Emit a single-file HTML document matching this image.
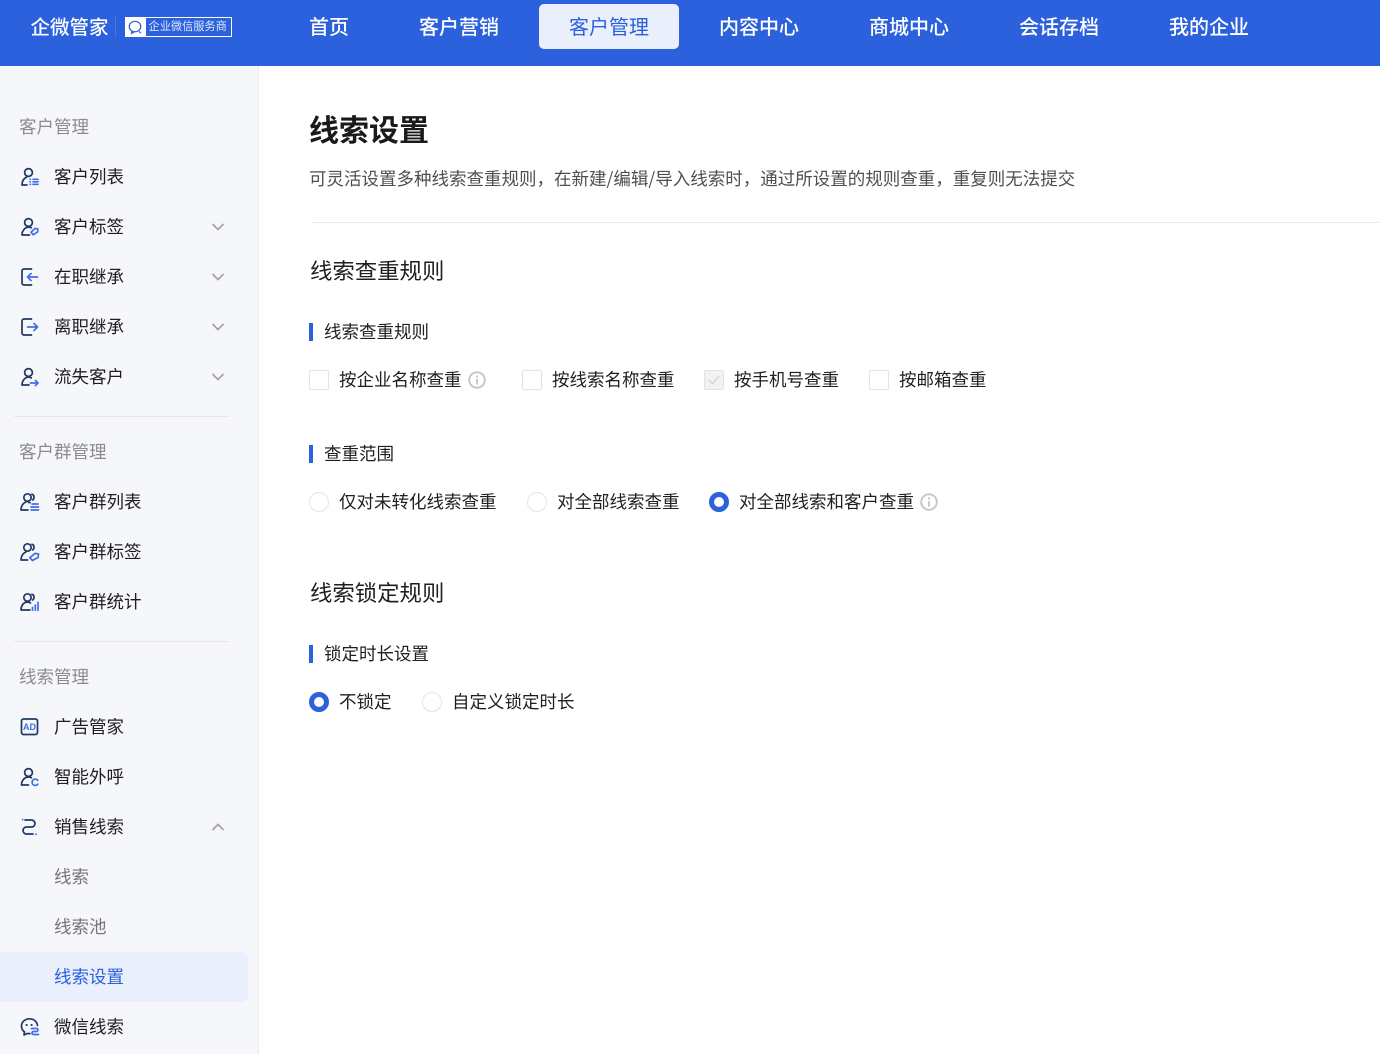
<!DOCTYPE html>
<html lang="zh-CN"><head><meta charset="utf-8"><title>线索设置</title>
<style>
html,body{margin:0;padding:0;background:#fff}
body{width:1380px;height:1054px;overflow:hidden;position:relative;font-family:"Liberation Sans","Noto Sans CJK SC",sans-serif;color:#1f1f1f}
.t{position:absolute;white-space:nowrap;line-height:26px;height:26px;font-size:17.5px}
.top{position:absolute;left:0;top:0;width:1380px;height:66px;background:#2b61dc}
.nav{position:absolute;top:4px;height:45px;line-height:49px;width:140px;text-align:center;color:#fff;font-size:20px;font-weight:500}
.nav.on{background:#e9effb;color:#2b61dc;border-radius:5px}
.side{position:absolute;left:0;top:66px;width:258px;height:988px;background:#f5f7fb;border-right:1px solid #ebedf1}
.g{color:#8c8c8c}
.hr{position:absolute;left:14px;width:215px;height:1px;background:#e8e8e8}
svg{position:absolute;overflow:visible}
svg.i{width:20px;height:20px;left:20px;fill:none;stroke:#1f3864;stroke-width:1.7;stroke-linecap:round;stroke-linejoin:round}
svg.i .b{stroke:#3f6fe4;stroke-width:1.7}
svg.c{left:211px;width:14px;height:8px;fill:none;stroke:#a3a3a3;stroke-width:1.7}
.bar{position:absolute;left:309px;width:4px;height:18px;background:#2b61dc}
.cb{position:absolute;width:18px;height:18px;border:1px solid #e3e3e3;border-radius:2px;background:#fff}
.r{position:absolute;width:18px;height:18px;border:1px solid #e3e3e3;border-radius:50%;background:#fff}
.ro{position:absolute;width:20px;height:20px;border-radius:50%;background:#fff;border:5.5px solid #2b61dc;box-sizing:border-box}
svg.info{width:18px;height:18px;fill:none;stroke:#c9c9c9;stroke-width:2}
.st{font-size:22.4px;line-height:32px;height:32px;color:#1f1f1f}
</style></head><body>
<div class="top"></div>
<div class="t" style="left:30.500px;top:15px;color:#fff;font-size:19.500px;font-weight:500">企微管家</div>
<div style="position:absolute;left:115px;top:17px;width:1px;height:20px;background:#4a79e3"></div>
<div style="position:absolute;left:125px;top:17px;width:107px;height:20px;background:#fff"></div>
<div style="position:absolute;left:146px;top:18px;width:85px;height:18px;background:#2b61dc"></div>
<svg style="left:128px;top:20px;width:16px;height:15px" viewBox="0 0 16 15" fill="none" stroke="#2b61dc" stroke-width="1.200"><ellipse cx="7" cy="6.500" rx="5.800" ry="5.200"/><path d="M4 11 3.500 13.500 6.500 11.800M11 11.500l2 1.500"/></svg>
<div class="t" style="left:148.500px;top:14px;color:#dfe8fb;font-size:11.200px">企业微信服务商</div>
<div class="nav" style="left:259px">首页</div>
<div class="nav" style="left:389px">客户营销</div>
<div class="nav on" style="left:539px;font-weight:400">客户管理</div>
<div class="nav" style="left:689px">内容中心</div>
<div class="nav" style="left:839px">商城中心</div>
<div class="nav" style="left:989px">会话存档</div>
<div class="nav" style="left:1139px">我的企业</div>

<div class="side"></div>
<div class="t g" style="left:19px;top:114px">客户管理</div>
<div class="t" style="left:54px;top:164px">客户列表</div>
<div class="t" style="left:54px;top:214px">客户标签</div>
<div class="t" style="left:54px;top:264px">在职继承</div>
<div class="t" style="left:54px;top:314px">离职继承</div>
<div class="t" style="left:54px;top:364px">流失客户</div>
<div class="hr" style="top:416px"></div>
<div class="t g" style="left:19px;top:439px">客户群管理</div>
<div class="t" style="left:54px;top:489px">客户群列表</div>
<div class="t" style="left:54px;top:539px">客户群标签</div>
<div class="t" style="left:54px;top:589px">客户群统计</div>
<div class="hr" style="top:641px"></div>
<div class="t g" style="left:19px;top:664px">线索管理</div>
<div class="t" style="left:54px;top:714px">广告管家</div>
<div class="t" style="left:54px;top:764px">智能外呼</div>
<div class="t" style="left:54px;top:814px">销售线索</div>
<div class="t" style="left:54px;top:864px;color:#757575">线索</div>
<div class="t" style="left:54px;top:914px;color:#757575">线索池</div>
<div style="position:absolute;left:0;top:952px;width:248px;height:50px;background:#e9effb;border-radius:0 6px 6px 0"></div>
<div class="t" style="left:54px;top:964px;color:#2b61dc">线索设置</div>
<div class="t" style="left:54px;top:1014px">微信线索</div>

<svg class="i" style="top:167px" viewBox="0 0 20 20"><circle cx="8.500" cy="5.500" r="3.900"/><path d="M2 18c0-3.500 1.500-6.500 4.500-7.800M2 18h5"/><path class="b" d="M10 12.300h.4M13 12.300h5M10 14.800h.4M13 14.800h5M10 17.300h.4M13 17.300h5" stroke-width="1.400"/></svg>
<svg class="i" style="top:217px" viewBox="0 0 20 20"><circle cx="8.500" cy="5.500" r="3.900"/><path d="M2 18c0-4 2.800-7.800 6.500-7.800 1.200 0 2 .2 2.800.6M2 18h7.500"/><path class="b" d="M13.300 17.800l-2.300-2.500 4-3.800 2.800.3-.1 3z"/></svg>
<svg class="i" style="top:267px" viewBox="0 0 20 20"><path d="M11.500 2H4a2 2 0 0 0-2 2v12a2 2 0 0 0 2 2h7.500"/><path class="b" d="M17.500 10H7.500M11 6.500 7.500 10l3.500 3.500"/></svg>
<svg class="i" style="top:317px" viewBox="0 0 20 20"><path d="M11.500 2H4a2 2 0 0 0-2 2v12a2 2 0 0 0 2 2h7.500"/><path class="b" d="M7.500 10h10M14 6.500 17.500 10 14 13.500"/></svg>
<svg class="i" style="top:367px" viewBox="0 0 20 20"><circle cx="8.500" cy="5.500" r="3.900"/><path d="M2 18c0-4 2.800-7.800 6.500-7.800 1 0 2 .3 2.800.7M2 18h7"/><path class="b" d="M10.500 16h7.500M15.500 13.500 18 16l-2.500 2.500"/></svg>
<svg class="i" style="top:492px" viewBox="0 0 20 20"><circle cx="7.500" cy="5.500" r="3.700"/><path d="M1 18c0-3.800 2-7 5-8M1 18h7M12 2.300c2.300.5 2.800 4.200.6 5.700M8.500 10.400l1.500.3"/><path class="b" d="M12 12h6M11 15h7.500M11 18h7.500" stroke-width="1.500"/></svg>
<svg class="i" style="top:542px" viewBox="0 0 20 20"><circle cx="7.500" cy="5.500" r="3.700"/><path d="M1 18c0-3.800 2-7 5-8M1 18h6.500M12 2.300c2.300.5 2.800 4.200.6 5.700"/><path class="b" d="M12.500 18.500l-2.700-2.700 5-4.300 3.700.4-.3 3.500z"/></svg>
<svg class="i" style="top:592px" viewBox="0 0 20 20"><circle cx="7.500" cy="5.500" r="3.700"/><path d="M1 18c0-3.800 2-7.500 6-8 1.500 0 2.500.3 3.500 1M1 18h9M12 2.300c2.300.5 2.800 4.200.6 5.700"/><path class="b" d="M12.500 18.300v-3M15.300 18.300v-5.300M18 18.300v-8"/></svg>
<svg class="i" style="top:717px" viewBox="0 0 20 20"><rect x="1.500" y="2" width="16" height="15.500" rx="2"/><text x="9.500" y="13" text-anchor="middle" font-size="9" font-weight="700" fill="#3f6fe4" stroke="none" font-family="Liberation Sans">AD</text></svg>
<svg class="i" style="top:767px" viewBox="0 0 20 20"><circle cx="8.500" cy="5.500" r="3.900"/><path d="M1.500 18c0-4.500 3-8 7-8 1 0 2 .2 3 .7M1.500 18h7"/><path class="b" d="M17.800 13.300a3.200 3.200 0 1 0 0 3.900"/></svg>
<svg class="i" style="top:817px" viewBox="0 0 20 20"><path d="M5 3h6.500a3.500 3.500 0 0 1 0 7H6.500a3.500 3.500 0 0 0 0 7H13"/><path class="b" d="M2.500 2.600h.2M16 17.200h.2" stroke-width="2.200"/></svg>
<svg class="i" style="top:1017px" viewBox="0 0 20 20"><path d="M9.500 1.800c-4.500 0-8 3.200-8 7.300 0 2.500 1.200 4.500 3 5.800L4 18l3.500-1.600c1 .2 1.500.2 2.500.2M17.500 8.500C17 4.500 13.700 1.800 9.500 1.800"/><path d="M6.500 8h.2M11.500 8h.2" stroke-width="2"/><path class="b" d="M11.500 11.500h5a1.500 1.500 0 0 1 0 3h-3a1.500 1.500 0 0 0 0 3h5"/></svg>
<svg class="c" style="top:223px" viewBox="0 0 14 8"><path d="M1.500 1 7 6.500 12.500 1"/></svg>
<svg class="c" style="top:273px" viewBox="0 0 14 8"><path d="M1.500 1 7 6.500 12.500 1"/></svg>
<svg class="c" style="top:323px" viewBox="0 0 14 8"><path d="M1.500 1 7 6.500 12.500 1"/></svg>
<svg class="c" style="top:373px" viewBox="0 0 14 8"><path d="M1.500 1 7 6.500 12.500 1"/></svg>
<svg class="c" style="top:823px" viewBox="0 0 14 8"><path d="M1.500 7 7 1.500 12.500 7"/></svg>

<div class="t" style="left:309px;top:110px;height:44px;line-height:44px;font-size:30px;font-weight:700;color:#1a1a1a">线索设置</div>
<div class="t" style="left:309px;top:165.500px;color:#4f4f4f;font-family:'Noto Sans CJK SC','Liberation Sans',sans-serif">可灵活设置多种线索查重规则，在新建/编辑/导入线索时，通过所设置的规则查重，重复则无法提交</div>
<div style="position:absolute;left:312px;top:222px;width:1068px;height:1px;background:#e8e8e8"></div>

<div class="t st" style="left:310px;top:256px">线索查重规则</div>
<div class="bar" style="top:323px"></div>
<div class="t" style="left:324px;top:319px">线索查重规则</div>
<div class="cb" style="left:309px;top:370px"></div>
<div class="t" style="left:339px;top:367px">按企业名称查重</div>
<svg class="info" style="left:468px;top:371px" viewBox="0 0 18 18"><circle cx="9" cy="9" r="7.800"/><path d="M9 8v5.500M9 4.500v2" stroke-width="2"/></svg>
<div class="cb" style="left:522px;top:370px"></div>
<div class="t" style="left:552px;top:367px">按线索名称查重</div>
<div class="cb" style="left:704px;top:370px;background:#f2f2f2"></div>
<svg style="left:708px;top:375px;width:12px;height:10px" viewBox="0 0 12 10" fill="none" stroke="#cfcfcf" stroke-width="1.200"><path d="M1 5l3.500 3.500L11 1.500"/></svg>
<div class="t" style="left:734px;top:367px">按手机号查重</div>
<div class="cb" style="left:869px;top:370px"></div>
<div class="t" style="left:899px;top:367px">按邮箱查重</div>

<div class="bar" style="top:445px"></div>
<div class="t" style="left:324px;top:441px">查重范围</div>
<div class="r" style="left:309px;top:492px"></div>
<div class="t" style="left:339px;top:489px">仅对未转化线索查重</div>
<div class="r" style="left:527px;top:492px"></div>
<div class="t" style="left:557px;top:489px">对全部线索查重</div>
<div class="ro" style="left:709px;top:492px"></div>
<div class="t" style="left:739px;top:489px">对全部线索和客户查重</div>
<svg class="info" style="left:920px;top:493px" viewBox="0 0 18 18"><circle cx="9" cy="9" r="7.800"/><path d="M9 8v5.500M9 4.500v2" stroke-width="2"/></svg>

<div class="t st" style="left:310px;top:578px">线索锁定规则</div>
<div class="bar" style="top:645px"></div>
<div class="t" style="left:324px;top:641px">锁定时长设置</div>
<div class="ro" style="left:309px;top:692px"></div>
<div class="t" style="left:339px;top:689px">不锁定</div>
<div class="r" style="left:422px;top:692px"></div>
<div class="t" style="left:452px;top:689px">自定义锁定时长</div>
</body></html>
